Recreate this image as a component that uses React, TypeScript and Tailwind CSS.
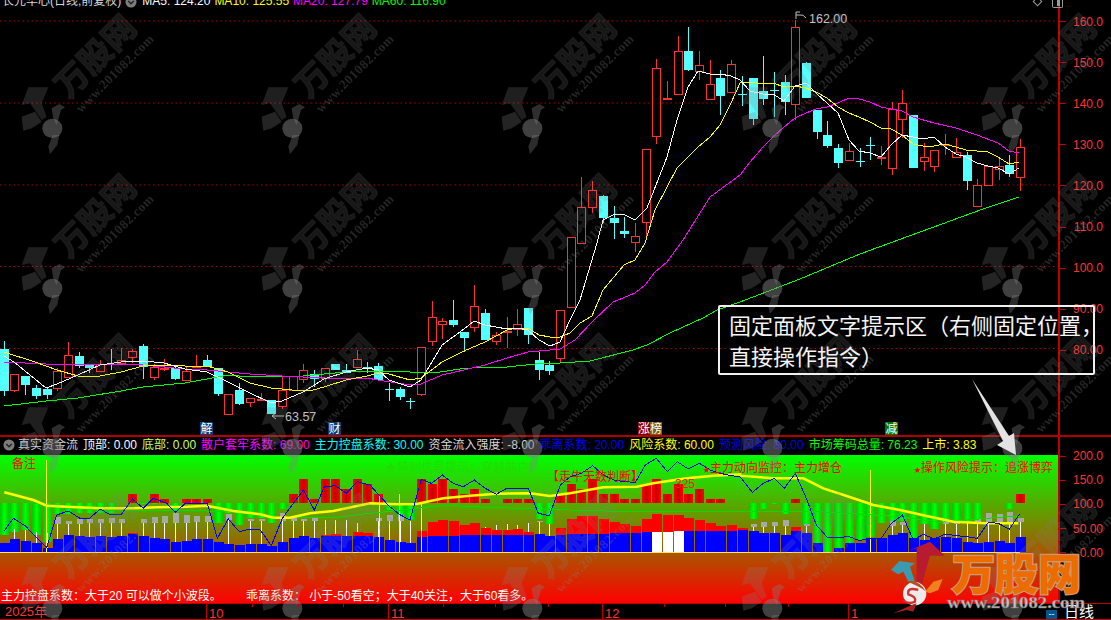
const cx = (i: number) => 3.8 + 10.697 * i;

// [0 red | 1 cyan, high, bodyTop, bodyBottom, low]
const candles: number[][] = [
  [1,341,349,391,396],[0,374,374,390,392],[1,376,376,385,395],[1,385,388,396,399],[1,387,389,395,399],[0,368,371,388,391],
  [0,342,355,377,377],[1,352,356,366,368],[1,365,365,368,373],[0,360,364,371,371],[1,349,364,365,370],[0,348,360,363,365],
  [0,349,351,357,363],[1,344,346,367,379],[0,364,367,377,380],[0,359,368,369,371],[1,366,368,379,380],[0,367,371,380,380],
  [0,355,366,368,368],[1,355,360,367,367],[1,368,368,394,396],[0,394,394,414,414],[1,383,390,404,405],[0,398,398,402,407],
  [0,393,399,401,401],[1,400,400,414,414],[0,377,390,406,409],[0,376,376,390,390],[0,364,370,379,383],[1,370,374,379,387],
  [0,368,368,378,382],[1,364,364,370,370],[1,364,370,373,373],[0,350,359,367,367],[1,362,367,369,373],[1,363,366,380,380],
  [1,383,389,390,401],[1,387,389,397,400],[1,398,401,402,409],[0,347,347,394,396],[0,301,317,341,346],[0,318,321,324,339],
  [1,300,320,325,327],[1,332,332,338,352],[0,285,306,327,332],[1,309,313,340,340],[0,332,335,341,345],[0,317,331,332,348],
  [0,309,324,329,336],[1,308,308,335,344],[1,352,360,370,380],[1,361,365,371,375],[0,310,310,358,362],[0,237,237,307,307],
  [0,177,207,243,243],[0,181,190,207,213],[1,195,196,218,223],[1,206,218,223,239],[1,217,231,234,238],[0,223,236,242,252],
  [0,149,149,222,237],[0,59,68,136,144],[0,81,98,100,100],[0,36,51,94,94],[1,27,51,70,71],[0,51,65,71,80],
  [0,60,84,99,99],[1,70,78,96,115],[0,60,64,92,92],[1,76,94,95,106],[1,78,78,119,125],[1,56,91,99,105],
  [1,72,90,91,117],[1,75,82,102,115],[0,20,27,104,120],[1,62,63,98,98],[1,110,110,132,139],[1,121,135,146,148],
  [1,144,148,163,168],[0,143,151,160,160],[1,148,161,162,167],[1,137,145,146,160],[0,146,157,159,165],[0,102,109,168,175],
  [0,90,103,119,138],[1,115,115,168,168],[0,143,157,161,171],[0,150,150,166,172],[0,134,144,145,155],[0,138,152,157,157],
  [1,152,155,181,190],[0,179,185,206,206],[0,166,166,185,185],[0,157,166,169,180],[1,155,165,174,177],[0,139,147,177,191],
];

const ma5 = "4,356 14,362 46,388 57,384 78,375 100,365 121,362 143,361 164,363 185,369 207,372 228,382 250,393 271,403 282,401 303,392 324,379 346,372 367,368 378,370 389,380 410,387 421,380 432,362 442,345 464,329 474,321 485,325 496,327 507,329 517,328 528,330 539,340 550,346 560,342 570,320 580,300 588,273 597,243 603,220 613,215 623,214 635,220 647,208 667,157 677,120 688,87 698,71 710,74 720,74 731,76 740,80 750,91 763,94 773,94 784,101 795,86 806,83 816,93 827,103 838,113 849,140 859,151 870,153 881,157 891,145 902,135 913,137 923,139 934,137 945,147 956,154 966,157 977,163 988,166 998,168 1009,174 1019,168";
const ma10 = "4,352 35,362 46,366 57,370 78,376 100,376 121,372 143,366 164,365 185,366 207,366 228,372 250,383 271,388 292,390 313,390 324,387 346,380 367,376 378,373 389,374 410,380 421,378 442,362 464,351 485,342 507,330 517,328 528,328 539,335 550,337 560,337 570,333 580,323 592,316 603,290 624,265 635,260 645,243 655,210 667,187 677,168 688,157 698,147 710,137 720,125 731,103 740,83 750,82 763,84 773,83 784,87 795,86 806,88 816,92 827,98 838,107 849,113 859,117 870,122 881,128 891,129 902,135 913,144 923,146 934,146 945,144 956,147 966,150 977,151 988,152 998,157 1009,164 1019,162";
const ma20 = "4,362 46,364 57,364 100,364 132,364 185,369 207,370 228,372 250,374 282,376 303,377 346,379 367,378 378,380 410,385 421,384 442,375 464,370 485,365 507,358 528,352 550,350 560,349 575,340 592,322 613,302 623,298 635,293 645,285 655,272 667,262 683,240 710,197 740,175 750,162 763,147 773,137 784,127 795,118 806,113 816,109 827,107 838,103 849,98 859,99 870,102 881,107 891,109 902,111 913,117 934,123 956,128 977,135 998,143 1009,151 1019,153";
const ma60 = "4,406 46,401 78,398 121,391 143,387 185,383 207,379 228,375 250,377 303,376 346,372 367,371 410,372 440,372 460,369 485,367 507,367 535,364 560,363 590,361 633,350 647,345 670,333 703,318 717,310 740,302 800,279 860,254 920,232 983,209 1019,197";

const zp = (off: number, arr: number[][]) => arr.map(([x, y]) => `${off + x / 3},${435 + y / 3}`).join(" ");
const yellowLine = [
  zp(0, [[13,172],[100,195],[140,212],[200,215],[300,220],[400,220],[470,217],[560,215],[620,212],[700,228],[780,238],[820,248],[870,248],[930,235],[1000,228],[1110,205]]),
  zp(370, [[0,205],[80,208],[140,207],[220,190],[300,182],[380,176],[480,175],[540,183],[600,175],[700,157],[800,155],[850,145],[950,130],[1030,122],[1110,118]]),
  zp(740, [[0,122],[100,130],[190,130],[250,160],[320,183],[400,210],[480,225],[560,243],[640,260],[740,265],[835,265]]),
].join(" ");
const blueLine = [
  zp(0, [[13,287],[40,250],[75,272],[140,338],[170,240],[205,228],[240,250],[268,250],[301,222],[331,240],[364,238],[397,192],[430,220],[460,190],[500,205],[526,232],[556,205],[622,205],[652,310],[685,252],[718,290],[751,282],[781,285],[814,332],[847,250],[880,205],[910,165],[943,225],[973,155],[1006,152],[1039,175],[1072,140],[1110,150]]),
  zp(370, [[25,178],[57,213],[88,238],[120,255],[154,133],[184,145],[217,120],[250,145],[280,155],[313,135],[346,160],[379,178],[410,160],[475,160],[505,235],[538,242],[571,150],[601,125],[634,115],[668,92],[700,120],[731,135],[763,140],[796,142],[826,90],[859,70],[892,110],[922,80],[955,102],[988,85],[1021,105],[1051,115],[1084,122],[1110,125]]),
  zp(740, [[37,172],[70,145],[103,130],[133,160],[166,115],[199,190],[229,270],[262,307],[295,307],[328,305],[358,317],[391,310],[424,310],[454,265],[487,240],[520,315],[550,298],[583,312],[616,297],[649,302],[679,305],[712,310],[745,262],[775,265],[808,283],[838,238]]),
].join(" ");
const greenLine = [
  zp(0, [[13,190],[140,210],[300,225],[500,225],[700,230],[830,248],[1000,248],[1110,235]]),
  zp(370, [[100,225],[230,210],[300,215],[450,220],[600,225],[780,230],[1110,228]]),
  zp(740, [[130,228],[200,228],[400,240],[480,245],[600,262],[680,255],[800,245],[838,245]]),
].join(" ");

const blue = [323,312,318,323,338,312,300,303,306,303,306,303,297,303,309,312,321,318,312,312,321,327,330,327,327,333,321,309,303,309,303,303,303,303,303,306,315,321,324,306,303,303,303,300,300,300,300,300,300,300,297,303,300,297,297,297,297,294,294,294,291,291,291,288,288,288,288,288,288,285,288,294,294,300,288,294,324,352,339,324,324,309,309,300,294,309,315,309,306,309,321,324,321,318,324,306];
const stack: Record<number, number> = {12:294,30:300,31:297,33:291,34:294,39:288,40:262,41:255,42:258,43:270,44:265,45:279,46:285,47:285,48:282,49:292,52:279,53:252,54:243,55:243,56:252,57:262,58:267,59:273,60:252,61:237,62:240,63:240,64:250,65:255,66:264,67:273,68:270,69:280,74:276};
const grayBox: Record<number, number[]> = {1:[283,283],2:[285,285],3:[290,290],4:[295,295],5:[245,268],6:[258,268],7:[252,268],8:[252,263],9:[252,263],10:[250,263],11:[252,263],13:[252,263],14:[247,263],15:[243,263],16:[235,263],17:[240,263],18:[243,261],19:[243,261],21:[237,255],23:[252,258],24:[252,258],26:[235,258],27:[250,258],28:[252,258],29:[250,258],30:[255,255],31:[255,255],32:[256,256],33:[264,264],35:[250,258],36:[240,258],37:[240,258],38:[258,258],45:[275,275],46:[270,270],47:[268,268],48:[270,270],49:[264,264],50:[258,262],51:[268,268],70:[267,275],71:[262,275],72:[262,272],73:[255,272],75:[267,272],83:[258,272],84:[262,270],86:[268,268],88:[258,268],89:[260,267],90:[262,262],91:[252,262],92:[234,262],93:[237,262],94:[232,262],95:[250,262]};
const greenHang: Record<number, number> = {0:300,1:290,2:285,3:300,4:320,5:238,6:238,7:235,8:235,9:235,10:235,13:207,14:207,16:225,20:265,21:235,22:270,23:250,24:250,25:265,26:222,36:225,37:240,38:255,50:252,51:268,70:252,71:222,72:208,73:238,75:270,76:325,77:352,78:340,79:325,80:315,81:305,82:265,83:258,84:258,85:308,86:268,87:282,88:260,89:262,90:260,91:258,94:222};
const redUp: Record<number, number> = {12:177,14:177,15:192,17:192,18:192,19:192,27:177,28:132,29:192,30:132,31:132,32:162,33:132,34:147,35:177,39:132,40:147,41:132,42:162,43:177,44:162,45:192,47:192,48:192,49:192,52:177,53:147,54:162,55:132,56:177,57:177,58:192,59:192,60:147,61:132,62:177,63:147,64:177,65:162,66:192,67:192,74:192,95:177};
const Y = (z: number) => 435 + z / 3;

function MainChart() {
  return (
    <svg width="1058" height="435" viewBox="0 0 1058 435" className="block">
      {[21, 103, 185, 266.5, 348.5].map((y) => (
        <line key={y} x1="0" x2="1058" y1={y} y2={y} stroke="#b00000" strokeDasharray="1.5 3" />
      ))}
      {candles.map(([c, h, t, b, l], i) => {
        const x = Math.round(cx(i));
        const col = c ? "#54ffff" : "#ff3232";
        const flat = b - t <= 2;
        return (
          <g key={i} shapeRendering="crispEdges">
            <line x1={x + 0.5} x2={x + 0.5} y1={h} y2={l} stroke={col} />
            {c ? (
              <rect x={x - 4} y={t} width="9" height={Math.max(b - t, 1)} fill={col} />
            ) : flat ? (
              <rect x={x - 4} y={t} width="9" height="2" fill={col} />
            ) : (
              <rect x={x - 3.5} y={t + 0.5} width="8" height={b - t} fill="#000" stroke={col} />
            )}
          </g>
        );
      })}
      <g fill="none" strokeWidth="1" strokeLinejoin="round" shapeRendering="crispEdges">
        <polyline points={ma60} stroke="#00ff00" />
        <polyline points={ma20} stroke="#ff00ff" />
        <polyline points={ma10} stroke="#ffff00" />
        <polyline points={ma5} stroke="#ffffff" />
      </g>
      <g stroke="#c0c0c0" fill="none">
        <path d="M796 19V12H800M796 15H800Q803 14 806 18" />
        <path d="M284 416H272M276 413L272 416L276 419" />
      </g>
      <text x="809" y="22.5" fill="#c4c4c4" fontSize="12.5">162.00</text>
      <text x="285" y="420.5" fill="#c4c4c4" fontSize="12.5">63.57</text>
    </svg>
  );
}

function LowerChart() {
  return (
    <svg width="1058" height="148" viewBox="0 455 1058 148" className="absolute inset-0">
      <defs>
        <linearGradient id="gb">
          <stop offset="0" stopColor="#00c800" />
          <stop offset="0.5" stopColor="#00ff00" />
          <stop offset="1" stopColor="#00c800" />
        </linearGradient>
        <linearGradient id="rb">
          <stop offset="0" stopColor="#ff0000" />
          <stop offset="0.5" stopColor="#c80000" />
          <stop offset="1" stopColor="#ff0000" />
        </linearGradient>
      </defs>
      <g shapeRendering="crispEdges">
        {Object.entries(greenHang).map(([k, z]) => (
          <rect key={k} x={Math.round(cx(+k)) - 4} y={Y(204)} width="9" height={(z - 204) / 3} fill="url(#gb)" />
        ))}
        {Object.entries(redUp).map(([k, z]) => (
          <rect key={k} x={Math.round(cx(+k)) - 4} y={Y(z)} width="9" height={(204 - z) / 3} fill="url(#rb)" />
        ))}
        {Object.entries(grayBox).map(([k, [a, b]]) => {
          const x = Math.round(cx(+k));
          return (
            <g key={k}>
              <line x1={x + 0.5} x2={x + 0.5} y1={Y(b)} y2={Y(blue[+k])} stroke="#ffffff" />
              {b > a && <rect x={x - 2} y={Y(a)} width="6" height={(b - a) / 3} fill="#a8a8a8" />}
            </g>
          );
        })}
        {Object.entries(stack).map(([k, z]) => (
          <rect key={k} x={Math.round(cx(+k)) - 4.5} y={Y(z)} width="10" height={(blue[+k] - z) / 3} fill="#ff0000" />
        ))}
        {blue.map((z, i) =>
          z < 352 ? (
            <rect key={i} x={Math.round(cx(i)) - 4.5} y={Y(z)} width="10" height={(352 - z) / 3} fill={i >= 61 && i <= 63 ? "#ffffff" : "#0000ff"} />
          ) : null
        )}
        {[46, 379, 399, 421, 870].map((x, i) => (
          <line key={x} x1={x + 0.5} x2={x + 0.5} y1={[460, 495, 494, 503, 470][i]} y2="552" stroke="#ffff30" />
        ))}
        <line x1="0" x2="1020" y1="552.5" y2="552.5" stroke="#ffe070" />
      </g>
      <polyline points={greenLine} fill="none" stroke="#00e000" strokeWidth="1" shapeRendering="crispEdges" />
      <polyline points={yellowLine} fill="none" stroke="#ffff00" strokeWidth="2.5" />
      <polyline points={blueLine} fill="none" stroke="#0000ee" strokeWidth="1" shapeRendering="crispEdges" />
      <text x="12" y="467.5" fill="#ff0000" fontSize="12">备注</text>
      <text x="385" y="472" fill="#20dc00" fontSize="12">★特别信号提示：穿越前户</text>
      <text x="547" y="481" fill="#ff0000" fontSize="12">【走牛天数判断】</text>
      <text x="675" y="488" fill="#f02000" fontSize="12">325</text>
      <text x="703" y="472" fill="#ff0000" fontSize="12"><tspan fontSize="7">★</tspan>主力动向监控：主力增仓</text>
      <text x="914" y="472" fill="#ff0000" fontSize="12"><tspan fontSize="7">★</tspan>操作风险提示：追涨博弈</text>
    </svg>
  );
}

function FigureShapes() {
  return (
    <g transform="scale(0.3333)">
      <polygon points="85,262 145,262 125,310 140,350 125,360 90,310 65,315" fill="rgba(128,128,128,.24)" />
      <polygon points="65,350 105,335 125,365 95,385 70,392" fill="rgba(128,128,128,.28)" />
      <polygon points="155,325 178,312 195,322 183,330 170,375 160,355" fill="rgba(128,128,128,.36)" />
      <ellipse cx="157" cy="385" rx="30" ry="29" fill="rgba(128,128,128,.5)" />
      <polygon points="158,405 178,405 172,435 150,462 145,440" fill="rgba(128,128,128,.34)" />
    </g>
  );
}

function Watermark() {
  return (
    <svg width="1111" height="620" className="absolute inset-0 pointer-events-none">
      <defs>
        <pattern id="wm" width="240" height="160" patternUnits="userSpaceOnUse">
          <text x="96" y="68" textAnchor="middle" fontSize="33" fontWeight="900" fill="rgba(128,128,128,.18)" stroke="rgba(128,128,128,.08)" strokeWidth="1.5" transform="rotate(-45 96 57)">万股网</text>
          <text x="115" y="77.5" textAnchor="middle" fontSize="13" fontWeight="700" letterSpacing="0.6" fill="rgba(128,128,128,.28)" fontFamily="Liberation Serif" transform="rotate(-45 115 73.5)">www.201082.com</text>
          <FigureShapes />
        </pattern>
      </defs>
      <rect width="1111" height="620" fill="url(#wm)" />
    </svg>
  );
}

function Logo() {
  return (
    <svg width="1111" height="620" className="absolute inset-0 pointer-events-none">
      <g stroke="#c00000" shapeRendering="crispEdges">
        {[252, 298, 343, 443, 495, 548, 664, 725, 788].map((x) => (
          <line key={x} x1={x + 0.5} x2={x + 0.5} y1="604" y2="607" />
        ))}
      </g>
      <g transform="translate(740 435) scale(0.3333)">
        <polygon points="530,340 505,347 570,320 615,362 570,362 545,450 530,440" fill="#b81a30" />
        <polygon points="453,405 478,378 525,385 510,395 525,440 505,440 490,410 475,418" fill="#3c9ab0" />
        <polygon points="555,470 580,440 608,432 595,465 570,475" fill="#f08020" />
        <ellipse cx="524" cy="476" rx="35" ry="35" fill="#ececec" />
        <path d="M500 440Q535 430 558 470L548 462Q520 445 500 440Z" fill="#b05020" />
        <path d="M535 465Q500 455 505 478Q530 485 525 500Q505 510 490 495" fill="none" stroke="#d03030" strokeWidth="7" />
        <polygon points="460,535 515,510 530,505 520,530 500,525" fill="#a02020" />
      </g>
      <text x="952" y="590" fontSize="43" fontWeight="900" fill="#ec6c00" stroke="#c89a70" strokeWidth="2.5" paintOrder="stroke">万股网</text>
      <text x="947" y="608" fontSize="17" fontWeight="700" fill="#d0d0d0" stroke="#787878" strokeWidth="0.5" fontFamily="Liberation Serif" textLength="138" lengthAdjust="spacingAndGlyphs" opacity="0.9">www.201082.com</text>
    </svg>
  );
}

function Chevron({ x = "" }: { x?: string }) {
  return (
    <svg width="12" height="12" viewBox="0 0 13 13" className={x}>
      <circle cx="6.5" cy="6.5" r="6" fill="#7c7c7c" />
      <path d="M3.5 5.5L6.5 8.5L9.5 5.5" fill="none" stroke="#222" strokeWidth="1.5" />
    </svg>
  );
}

const priceLabels = ["160.0", "150.0", "140.0", "130.0", "120.0", "110.0", "100.0", "90.00", "80.00"];
const lowerLabels = ["200.0", "150.0", "100.0", "50.00", "0.00"];
const panelItems: [string, string][] = [
  ["顶部: 0.00", "text-white"],
  ["底部: 0.00", "text-[#ccff66]"],
  ["散户套牢系数: 69.00", "text-[#ff00ff]"],
  ["主力控盘系数: 30.00", "text-[#00ffff]"],
  ["资金流入强度: -8.00", "text-[#d8d8d8]"],
  ["乖离系数: 20.00", "text-[#0000f0]"],
  ["风险系数: 60.00", "text-[#ffff00]"],
  ["预测风险: 80.00", "text-[#0000f0]"],
  ["市场筹码总量: 76.23", "text-[#00ff00]"],
  ["上市: 3.83", "text-[#ffff00]"],
];

export default function App() {
  return (
    <div className="relative w-[1111px] h-[620px] overflow-hidden bg-black text-[12px] font-['Liberation_Sans','Noto_Sans_CJK_SC',sans-serif]">
      {/* upper panel */}
      <div className="flex h-[435px]">
        <div className="relative w-[1058px]">
          <MainChart />
          <div className="absolute left-[2px] top-[-8px] flex items-center whitespace-nowrap leading-[18px]">
            <span className="text-[#d8d8d8]">长元华心(日线,前复权)</span>
            <Chevron x="ml-[4px] mt-[2px]" />
            <span className="ml-[5px] text-white">MA5: 124.20</span>
            <span className="ml-[4px] text-[#ffff00]">MA10: 125.55</span>
            <span className="ml-[4px] text-[#ff00ff]">MA20: 127.79</span>
            <span className="ml-[4px] text-[#00ff00]">MA60: 116.90</span>
          </div>
          <div className="absolute left-[200px] top-[422px] flex h-[13px] w-[13px] items-center justify-center bg-[#003f7a] text-white">解</div>
          <div className="absolute left-[328px] top-[422px] flex h-[13px] w-[13px] items-center justify-center bg-[#003f7a] text-white">财</div>
          <div className="absolute left-[638px] top-[422px] flex h-[13px] text-white">
            <span className="flex w-[12px] items-center justify-center bg-[#8a0000]">涨</span>
            <span className="flex w-[12px] items-center justify-center bg-[#7a5a10]">榜</span>
          </div>
          <div className="absolute left-[885px] top-[422px] flex h-[13px] w-[13px] items-center justify-center bg-[#007700] text-white">减</div>
        </div>
        <div className="relative flex w-[53px] flex-col border-l-2 border-[#c00000] pt-[1px]">
          {priceLabels.map((l) => (
            <div key={l} className="flex h-[41.1px] items-center justify-between pr-[8px] text-[#ff3232]">
              <span className="h-[1px] w-[6px] bg-[#c00000]" />
              <span>{l}</span>
            </div>
          ))}
          <div className="absolute left-[-26px] top-0 flex items-center gap-[11px]">
            <span className="h-[7px] w-[7px] rotate-45 border border-[#9a9a9a] mt-[-5px]" />
            <span className="flex h-[8px] w-[11px] justify-end rounded-b-[2px] border border-t-0 border-[#9a9a9a] pr-[2px]"><span className="h-[6px] w-[3px] bg-[#9a9a9a]" /></span>
          </div>
        </div>
      </div>

      {/* lower panel */}
      <div className="flex h-[185px] flex-col border-t-2 border-[#b00000]">
        <div className="flex flex-1">
          <div className="flex w-[1058px] flex-col">
            <div className="flex h-[18px] items-center gap-[5px] whitespace-nowrap pb-[2px] pl-[3px]">
              <Chevron />
              <span className="ml-[-2px] text-[#d8d8d8]">真实资金流</span>
              {panelItems.map(([t, c]) => (
                <span key={t} className={c}>{t}</span>
              ))}
            </div>
            <div className="relative flex flex-1 flex-col justify-end bg-[linear-gradient(#00ff00,#ff0000)]">
              <LowerChart />
              <div className="relative flex h-[14px] items-center whitespace-pre text-white">
                <span className="ml-[1px] w-[245px]">主力控盘系数：大于20 可以做个小波段。</span>
                <span>乖离系数： 小于-50看空；大于40关注，大于60看多。</span>
              </div>
            </div>
          </div>
          <div className="flex w-[53px] flex-col border-l-2 border-[#c00000] pt-[7px]">
            {lowerLabels.map((l) => (
              <div key={l} className="flex h-[24.2px] items-center justify-between pr-[8px] text-[#ff3232]">
                <span className="h-[1px] w-[6px] bg-[#c00000]" />
                <span>{l}</span>
              </div>
            ))}
          </div>
        </div>
        {/* time axis */}
        <div className="flex h-[17px] items-center border-y border-[#c00000] text-[13px] text-[#ff3232]">
          <div className="w-[206px] pl-[5px]">2025年</div>
          <div className="h-full w-[182px] border-l border-[#c00000] pl-[2px]">10</div>
          <div className="h-full w-[214px] border-l border-[#c00000] pl-[2px]">11</div>
          <div className="h-full w-[246px] border-l border-[#c00000] pl-[2px]">12</div>
          <div className="h-full w-[198px] border-l border-[#c00000] pl-[2px]">1</div>
          <div className="flex h-[9px] w-[11px] items-center justify-center self-end bg-[#00558a] text-[9px] leading-none text-white">--</div>
          <div className="ml-[7px] text-[15px] leading-[15px] text-white">日线</div>
        </div>
      </div>

      <Watermark />
      <Logo />

      {/* annotation overlay */}
      <div className="absolute left-[718px] top-[305px] h-[70px] w-[377px] whitespace-nowrap rounded-[2px] border-2 border-[#f0f0f0] pl-[9px] pt-[4px] text-[22px] leading-[31px] text-[#f4f4f4]">
        <div>固定面板文字提示区（右侧固定位置，</div>
        <div>直接操作指令）</div>
      </div>
      <svg width="1111" height="620" className="absolute inset-0 pointer-events-none">
        <polygon points="972,379 1009,436 1014,433 1016,455 997,445 1003,441" fill="#e2e2e2" />
      </svg>
    </div>
  );
}
